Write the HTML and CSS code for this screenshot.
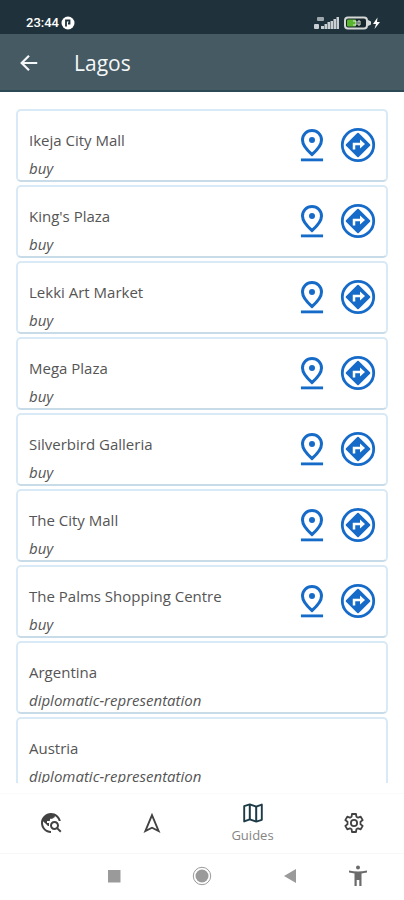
FILE: index.html
```html
<!DOCTYPE html>
<html lang="en">
  <head>
    <meta charset="UTF-8" />
    <meta name="viewport" content="width=device-width, initial-scale=1.0" />
    <link rel="stylesheet" href="styles.css">
    <title>Lagos</title>
  </head>
  <body>
    <!-- shared icons for the list rows -->
    <svg class="sprite" aria-hidden="true">
      <symbol id="pin" viewBox="0 0 24 24">
        <path d="M12 2.900c-3.400 0-6 2.550-6 6 0 2.650 2 5.700 6 9.100 4-3.400 6-6.450 6-9.100 0-3.450-2.600-6-6-6z" fill="none" stroke="currentColor" stroke-width="1.900" />
        <circle cx="12" cy="8.900" r="1.900" fill="currentColor" />
        <path d="M5 20.500h14v1.800H5z" fill="currentColor" />
      </symbol>
      <symbol id="directions" viewBox="0 0 36 36">
        <circle cx="18" cy="18" r="15.700" fill="none" stroke="currentColor" stroke-width="2.800" />
        <rect x="9" y="9" width="18" height="18" rx="1" transform="rotate(45 18 18)" fill="currentColor" />
        <path d="M14 22.500v-5.500h7" fill="none" stroke="#fff" stroke-width="2.500" />
        <path d="M20 12.500l5 4.500-5 4.500z" fill="#fff" />
      </symbol>
    </svg>

    <div class="status-bar">
      <span class="time">23:44</span>
      <svg class="status-app" viewBox="0 0 14 14">
        <circle cx="7" cy="7" r="6.500" fill="#fff" />
        <path d="M5 10.500V4.500h3.500v3H7" fill="none" stroke="#1f323b" stroke-width="1.800" />
      </svg>
      <svg class="signal" viewBox="0 0 26 14">
        <g fill="#c9cfd2">
          <rect x="3" y="1" width="7" height="4" rx="1" opacity=".75" />
          <rect x="0" y="8" width="5" height="5" rx="1" />
          <rect x="7" y="10" width="3" height="3" />
          <rect x="10.500" y="8" width="2.500" height="5" />
          <rect x="13.500" y="6" width="2.500" height="7" />
          <rect x="16.500" y="5" width="2.500" height="8" />
          <rect x="19.500" y="3" width="2.500" height="10" />
          <rect x="22.500" y="1" width="2.500" height="12" />
        </g>
      </svg>
      <svg class="battery" viewBox="0 0 36 14">
        <rect x="1" y="1.500" width="22" height="11" rx="3" fill="#17262d" stroke="#d5d8d6" stroke-width="2" />
        <path d="M24 4l3 1.500v3L24 10z" fill="#d5d8d6" />
        <rect x="3" y="3.500" width="9" height="7" rx="1" fill="#58b52c" />
        <path d="M9 5h3v4H9M14 5h2v4h-2z" fill="none" stroke="#dfe8da" />
        <path d="M33.500 1.500L29 8h3l-1.500 5L36 6h-3z" fill="#fff" />
      </svg>
    </div>

    <header class="app-bar">
      <button class="back" aria-label="Back">
        <svg viewBox="0 0 24 24"><path d="M21 12H4.500M12 4l-8 8 8 8" fill="none" stroke="currentColor" stroke-width="2.400" /></svg>
      </button>
      <h1>Lagos</h1>
    </header>

    <main class="places">
      <article class="card">
        <div class="info">
          <h2>Ikeja City Mall</h2>
          <p>buy</p>
        </div>
        <button class="pin" aria-label="Show on map"><svg><use href="#pin" /></svg></button>
        <button class="directions" aria-label="Directions"><svg><use href="#directions" /></svg></button>
      </article>
      <article class="card">
        <div class="info">
          <h2>King's Plaza</h2>
          <p>buy</p>
        </div>
        <button class="pin" aria-label="Show on map"><svg><use href="#pin" /></svg></button>
        <button class="directions" aria-label="Directions"><svg><use href="#directions" /></svg></button>
      </article>
      <article class="card">
        <div class="info">
          <h2>Lekki Art Market</h2>
          <p>buy</p>
        </div>
        <button class="pin" aria-label="Show on map"><svg><use href="#pin" /></svg></button>
        <button class="directions" aria-label="Directions"><svg><use href="#directions" /></svg></button>
      </article>
      <article class="card">
        <div class="info">
          <h2>Mega Plaza</h2>
          <p>buy</p>
        </div>
        <button class="pin" aria-label="Show on map"><svg><use href="#pin" /></svg></button>
        <button class="directions" aria-label="Directions"><svg><use href="#directions" /></svg></button>
      </article>
      <article class="card">
        <div class="info">
          <h2>Silverbird Galleria</h2>
          <p>buy</p>
        </div>
        <button class="pin" aria-label="Show on map"><svg><use href="#pin" /></svg></button>
        <button class="directions" aria-label="Directions"><svg><use href="#directions" /></svg></button>
      </article>
      <article class="card">
        <div class="info">
          <h2>The City Mall</h2>
          <p>buy</p>
        </div>
        <button class="pin" aria-label="Show on map"><svg><use href="#pin" /></svg></button>
        <button class="directions" aria-label="Directions"><svg><use href="#directions" /></svg></button>
      </article>
      <article class="card">
        <div class="info">
          <h2>The Palms Shopping Centre</h2>
          <p>buy</p>
        </div>
        <button class="pin" aria-label="Show on map"><svg><use href="#pin" /></svg></button>
        <button class="directions" aria-label="Directions"><svg><use href="#directions" /></svg></button>
      </article>
      <article class="card">
        <div class="info">
          <h2>Argentina</h2>
          <p>diplomatic-representation</p>
        </div>
      </article>
      <article class="card">
        <div class="info">
          <h2>Austria</h2>
          <p>diplomatic-representation</p>
        </div>
      </article>
    </main>

    <nav class="tabs">
      <button aria-label="Explore">
        <svg viewBox="0 0 24 24" fill="currentColor">
          <path d="M19.300 16.900c.4-.7.7-1.500.7-2.400 0-2.500-2-4.500-4.500-4.500S11 12 11 14.500s2 4.500 4.500 4.500c.9 0 1.700-.3 2.400-.7l3.200 3.200 1.400-1.400-3.200-3.200zM15.500 17c-1.400 0-2.500-1.100-2.500-2.500s1.100-2.500 2.500-2.500 2.500 1.100 2.500 2.500-1.100 2.500-2.500 2.500z" />
          <path d="M12 20v2C6.480 22 2 17.520 2 12S6.480 2 12 2c4.840 0 8.870 3.440 9.800 8h-2.070c-.64-2.460-2.400-4.470-4.730-5.410V5c0 1.100-.9 2-2 2h-2v2c0 .55-.45 1-1 1H8v2h2v3H9l-4.790-4.790C4.080 10.790 4 11.380 4 12c0 4.410 3.590 8 8 8z" />
          <path d="M4 9.500C5 5.500 8.500 3 12 3l4 1v2l-3 2h-2l-1 2H8l-2 2z" opacity=".8" />
        </svg>
      </button>
      <button aria-label="Navigate">
        <svg viewBox="0 0 24 24"><path d="M12 4.200L5.400 20l6.600-3.300 6.600 3.300z" fill="none" stroke="currentColor" stroke-width="1.900" /></svg>
      </button>
      <button class="active">
        <svg viewBox="0 0 24 24">
          <path d="M3.200 5.200L8.800 3.400l6.400 2.200 5.600-2v15.200l-5.600 1.800-6.400-2.200-5.600 2z" fill="none" stroke="currentColor" stroke-width="1.900" stroke-linejoin="round" />
          <path d="M8.800 3.500v15M15.200 5.500v15" stroke="currentColor" stroke-width="2" />
        </svg>
        <span>Guides</span>
      </button>
      <button aria-label="Settings">
        <svg viewBox="0 0 24 24" fill="none" stroke="currentColor" stroke-width="1.800" stroke-linejoin="round">
          <path d="M10 3h4l.4 2.700 1.700 1 2.600-1 2 3.400-2.200 1.700v2.400l2.200 1.700-2 3.400-2.600-1-1.700 1L14 21h-4l-.4-2.700-1.700-1-2.600 1-2-3.400 2.200-1.700v-2.400L3.300 9.100l2-3.400 2.600 1 1.700-1z" />
          <circle cx="12" cy="12" r="3.100" />
        </svg>
      </button>
    </nav>

    <div class="system-nav">
      <button aria-label="Recent apps"><svg viewBox="0 0 20 20"><path d="M4 4h12.500v12.500H4z" /></svg></button>
      <button aria-label="Home">
        <svg viewBox="0 0 20 20"><circle cx="10" cy="10" r="8.700" fill="none" stroke="currentColor" /><circle cx="10" cy="10" r="6.500" /></svg>
      </button>
      <button aria-label="Go back"><svg viewBox="0 0 20 20"><path d="M4 10l12-7v14z" /></svg></button>
      <button class="accessibility" aria-label="Accessibility">
        <svg viewBox="0 0 20 22"><circle cx="10" cy="2.500" r="2" /><path d="M1 5.500c6 1.200 12 1.200 18 0v2c-2 .5-4 .8-5.500 1V21h-2.200v-6H8.700v6H6.500V8.500c-1.500-.2-3.500-.5-5.500-1z" /></svg>
      </button>
    </div>
  </body>
</html>
```

FILE: styles.css
```css
* {
  box-sizing: border-box;
}
body {
  margin: 0;
  height: 100vh;
  display: flex;
  flex-direction: column;
  background: #fff;
  color: #555;
  font-family: 'Open Sans', 'Noto Sans', sans-serif;
}
h1,
h2,
p {
  margin: 0;
  font-weight: normal;
}
button {
  display: flex;
  align-items: center;
  justify-content: center;
  padding: 0;
  border: none;
  background: none;
  color: inherit;
  font: inherit;
  cursor: pointer;
}
svg {
  display: block;
  flex: none;
}
.sprite {
  position: absolute;
  width: 0;
  height: 0;
}

.status-bar {
  flex: none;
  display: flex;
  align-items: center;
  height: 34px;
  padding: 12px 24px 0 26px;
  background: #1f323b;
  color: #fff;
}
.time {
  font-family: Roboto, sans-serif;
  font-size: 13px;
  font-weight: 500;
  line-height: 16px;
}
.status-app {
  width: 14px;
  height: 14px;
  margin-left: 2px;
}
.signal {
  width: 26px;
  height: 14px;
  margin-left: auto;
}
.battery {
  width: 36px;
  height: 14px;
  margin-left: 4px;
}

.app-bar {
  flex: none;
  display: flex;
  align-items: center;
  gap: 34px;
  height: 58px;
  padding: 2px 18px 0;
  border-bottom: 2px solid #2c4a55;
  background: #465a64;
  color: #f4f7f8;
}
.back svg {
  width: 22px;
  height: 22px;
}
h1 {
  font-size: 21px;
  line-height: 28px;
}

.places {
  flex: 1;
  min-height: 0;
  display: flex;
  flex-direction: column;
  gap: 3px;
  padding: 17px 16px 0;
  overflow-y: auto;
  scrollbar-width: none;
}
.card {
  flex: none;
  display: flex;
  align-items: center;
  gap: 9px;
  padding: 0 10px 0 11px;
  border: 2px solid #d9eaf6;
  border-bottom-color: #c8dbe8;
  border-radius: 5px;
}
.info {
  flex: 1;
  padding: 17px 0 2px;
}
h2 {
  font-size: 15px;
  line-height: 24px;
}
.info p {
  margin-top: 6px;
  font-size: 15px;
  font-style: italic;
  line-height: 20px;
}
.card button {
  padding-bottom: 2px;
  color: #166bc9;
}
.pin svg {
  width: 38px;
  height: 38px;
}
.directions svg {
  width: 36px;
  height: 36px;
}

.tabs {
  flex: none;
  display: flex;
  height: 60px;
  margin-top: 10px;
  border-top: 1px solid #fafafa;
}
.tabs button {
  flex: 1;
  flex-direction: column;
  padding-bottom: 1px;
  color: #424242;
}
.tabs svg {
  width: 24px;
  height: 24px;
}
.tabs .active svg {
  color: #1d3a47;
}
.tabs span {
  color: #858585;
  font-size: 13px;
  line-height: 20px;
}

.system-nav {
  flex: none;
  display: flex;
  height: 47px;
  padding: 0 22px 0 70px;
  border-top: 1px solid #f8f8f8;
}
.system-nav button {
  flex: 88;
  padding-bottom: 2px;
  color: #9a9a9a;
}
.system-nav svg {
  width: 20px;
  height: 20px;
  fill: currentColor;
}
.system-nav .accessibility {
  flex: 48;
  color: #6b6b6b;
}
.accessibility svg {
  height: 22px;
}
```
